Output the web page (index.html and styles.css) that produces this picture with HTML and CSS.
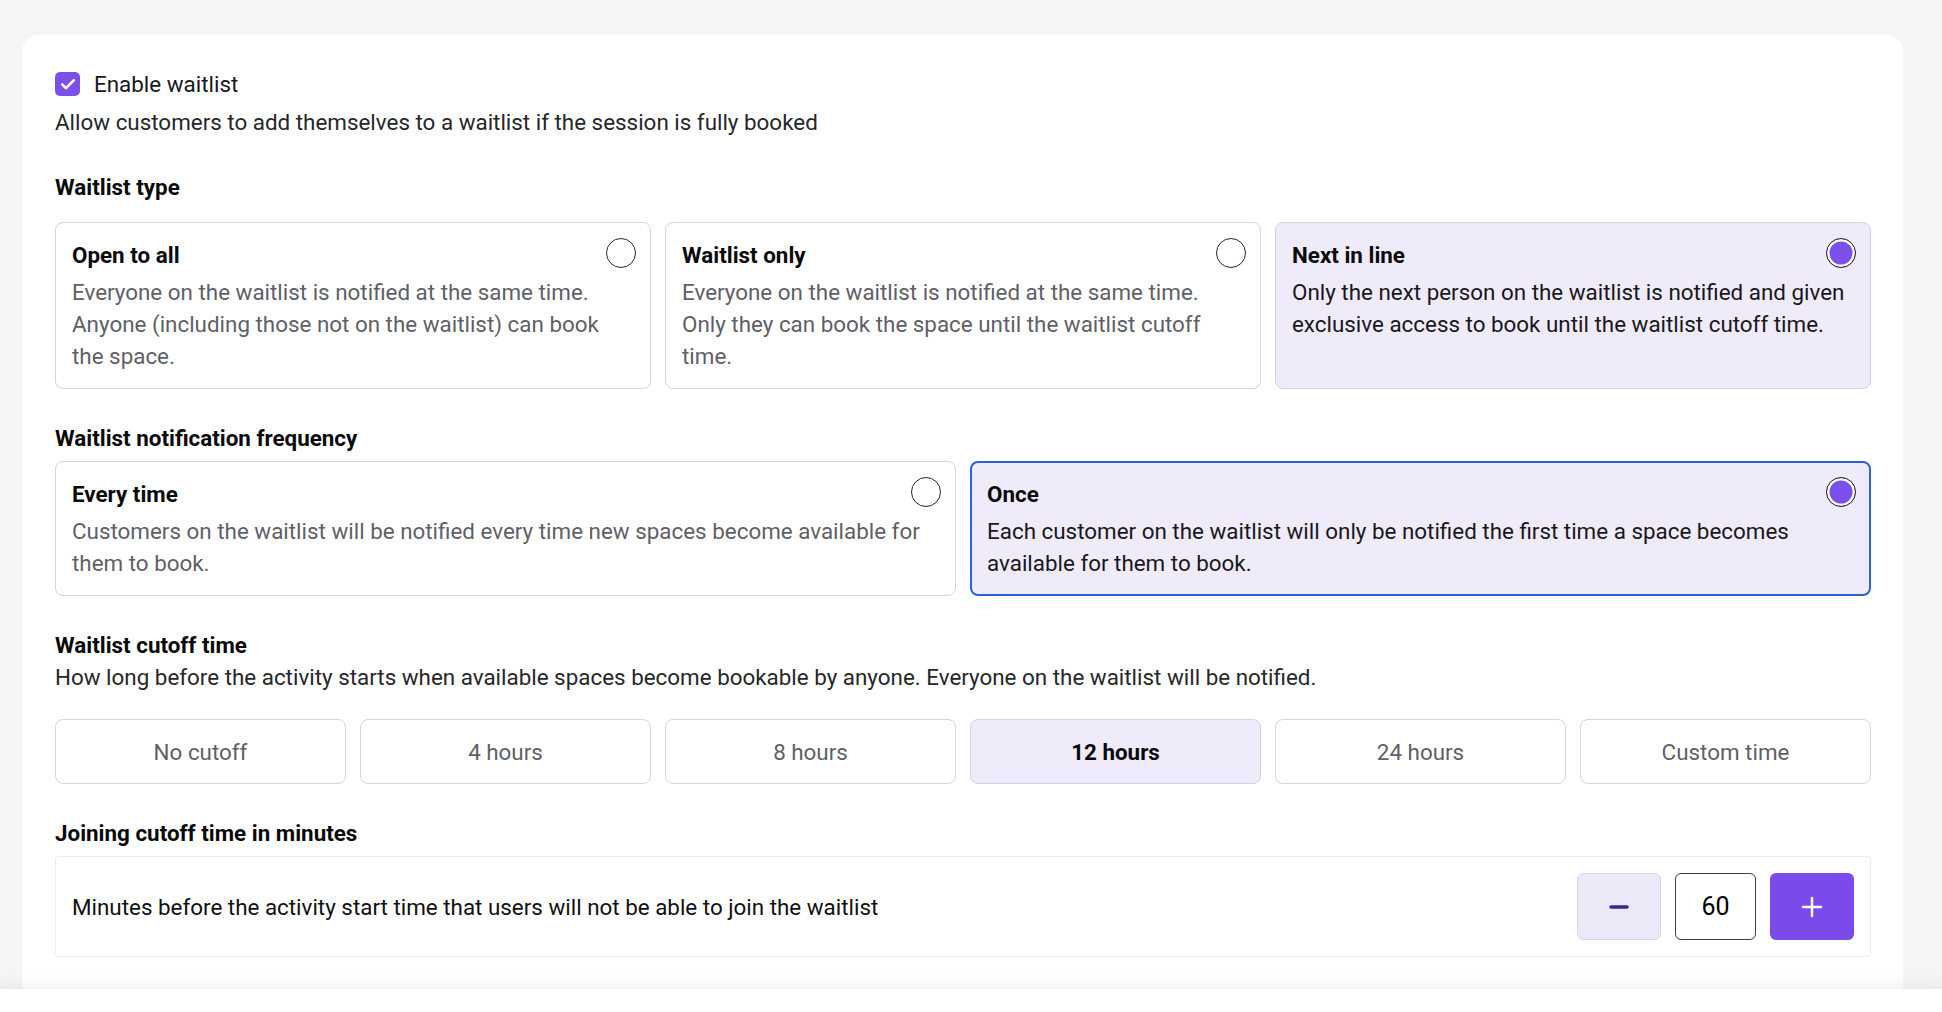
FILE: index.html
```html
<!DOCTYPE html>
<html lang="en">
  <head>
    <meta charset="UTF-8" />
    <meta name="viewport" content="width=device-width, initial-scale=1.0" />
    <title>Waitlist settings</title>
    <link rel="stylesheet" href="styles.css">
  </head>
  <body>
    <div class="page">
      <main class="settings">
        <label class="check-row">
          <span class="checkbox">
            <svg viewBox="0 0 24 24" width="20" height="20">
              <path d="M5 12.5l4.5 4.5L19 7.5" fill="none" stroke="#fff" stroke-width="3" stroke-linecap="round" stroke-linejoin="round" />
            </svg>
          </span>
          Enable waitlist
        </label>
        <p class="hint">Allow customers to add themselves to a waitlist if the session is fully booked</p>

        <section class="group">
          <h3 class="group-title first">Waitlist type</h3>
          <div class="options three">
            <div class="option">
              <div class="option-head">
                <span class="option-title">Open to all</span>
                <span class="radio"></span>
              </div>
              <p class="option-desc">Everyone on the waitlist is notified at the same time. Anyone (including those not on the waitlist) can book the space.</p>
            </div>
            <div class="option">
              <div class="option-head">
                <span class="option-title">Waitlist only</span>
                <span class="radio"></span>
              </div>
              <p class="option-desc">Everyone on the waitlist is notified at the same time. Only they can book the space until the waitlist cutoff time.</p>
            </div>
            <div class="option selected">
              <div class="option-head">
                <span class="option-title">Next in line</span>
                <span class="radio on"></span>
              </div>
              <p class="option-desc">Only the next person on the waitlist is notified and given exclusive access to book until the waitlist cutoff time.</p>
            </div>
          </div>
        </section>

        <section class="group">
          <h3 class="group-title">Waitlist notification frequency</h3>
          <div class="options two">
            <div class="option">
              <div class="option-head">
                <span class="option-title">Every time</span>
                <span class="radio"></span>
              </div>
              <p class="option-desc">Customers on the waitlist will be notified every time new spaces become available for them to book.</p>
            </div>
            <div class="option selected focused">
              <div class="option-head">
                <span class="option-title">Once</span>
                <span class="radio on"></span>
              </div>
              <p class="option-desc">Each customer on the waitlist will only be notified the first time a space becomes available for them to book.</p>
            </div>
          </div>
        </section>

        <section class="group">
          <h3 class="group-title flush">Waitlist cutoff time</h3>
          <p class="group-desc">How long before the activity starts when available spaces become bookable by anyone. Everyone on the waitlist will be notified.</p>
          <div class="cutoffs">
            <button class="cutoff">No cutoff</button>
            <button class="cutoff">4 hours</button>
            <button class="cutoff">8 hours</button>
            <button class="cutoff active">12 hours</button>
            <button class="cutoff">24 hours</button>
            <button class="cutoff">Custom time</button>
          </div>
        </section>

        <section class="group">
          <h3 class="group-title">Joining cutoff time in minutes</h3>
          <div class="minutes-box">
            <span>Minutes before the activity start time that users will not be able to join the waitlist</span>
            <div class="stepper">
              <button class="step minus">
                <svg viewBox="0 0 24 24" width="24" height="24">
                  <path d="M4 12h16" stroke="#36288f" stroke-width="3.5" stroke-linecap="round" />
                </svg>
              </button>
              <input class="step-value" type="text" value="60" />
              <button class="step plus">
                <svg viewBox="0 0 24 24" width="24" height="24">
                  <path d="M12 3v18M3 12h18" stroke="#fff" stroke-width="2.5" stroke-linecap="round" />
                </svg>
              </button>
            </div>
          </div>
        </section>
      </main>
    </div>
    <footer class="bottom-bar"></footer>
  </body>
</html>
```

FILE: styles.css
```css
body {
  margin: 0;
  padding: 0;
  font-family: Roboto, "Noto Sans", Arial, sans-serif;
  font-size: 22.4px;
  background-color: #fff;
  color: #111;
}

.page {
  background-color: #f5f5f5;
  padding: 35px 39px 0 22px;
}

.settings {
  background-color: #fff;
  border-radius: 16px 16px 0 0;
  padding: 33px 32px 32px 33px;
}

.check-row {
  display: flex;
  align-items: center;
  gap: 14px;
  height: 32px;
  font-size: 22.4px;
  color: #18181b;
}

.checkbox {
  width: 25px;
  height: 24px;
  border-radius: 5px;
  background-color: #7b4fea;
  display: flex;
  align-items: center;
  justify-content: center;
}

.hint {
  margin: 6px 0 0;
  font-size: 22.4px;
  line-height: 32px;
  color: #27272a;
}

.group {
  margin-top: 33px;
}

.group-title {
  margin: 0 0 7px;
  font-size: 22.4px;
  line-height: 32px;
  font-weight: 700;
  color: #0a0a0a;
}

.group-title.first {
  margin-bottom: 19px;
}

.group-title.flush {
  margin-bottom: 0;
}

.group-desc {
  margin: 0 0 26px;
  font-size: 22.4px;
  line-height: 32px;
  color: #27272a;
}

.options {
  display: grid;
  gap: 14px;
}

.options.three {
  grid-template-columns: repeat(3, 1fr);
}

.options.two {
  grid-template-columns: repeat(2, 1fr);
}

.option {
  border: 1px solid #d6d6da;
  border-radius: 8px;
  padding: 16px 14px 16px 16px;
  background-color: #fff;
}

.option.selected {
  background-color: #efebfb;
  border-color: #d5d1e2;
}

.option.focused {
  border: 2px solid #2b63d3;
  padding: 15px 13px 15px 15px;
}

.option-head {
  display: flex;
  justify-content: space-between;
  align-items: flex-start;
}

.option-title {
  font-size: 22.4px;
  line-height: 32px;
  font-weight: 700;
  color: #0a0a0a;
}

.radio {
  width: 30px;
  height: 30px;
  box-sizing: border-box;
  border: 1.5px solid #27272a;
  border-radius: 50%;
  background-color: #fff;
  margin-top: -1px;
}

.radio.on {
  background-color: #7b4fea;
  box-shadow: inset 0 0 0 2.5px #fff;
}

.option-desc {
  margin: 5px 8px 0 0;
  font-size: 22.4px;
  line-height: 32px;
  color: #5f5f67;
}

.option.selected .option-desc {
  color: #18181b;
}

.cutoffs {
  display: grid;
  grid-template-columns: repeat(6, 1fr);
  gap: 14px;
}

.cutoff {
  height: 65px;
  border: 1px solid #d6d6da;
  border-radius: 8px;
  background-color: #fff;
  font-family: inherit;
  font-size: 22.4px;
  color: #5f5f67;
  cursor: pointer;
}

.cutoff.active {
  background-color: #efebfb;
  border-color: #d5d1e2;
  color: #0a0a0a;
  font-weight: 700;
}

.minutes-box {
  display: flex;
  align-items: center;
  justify-content: space-between;
  border: 1px solid #ececee;
  border-radius: 4px;
  padding: 16px;
  font-size: 22.4px;
  color: #111;
}

.stepper {
  display: flex;
  gap: 14px;
}

.step {
  width: 84px;
  height: 67px;
  border-radius: 6px;
  display: flex;
  align-items: center;
  justify-content: center;
  cursor: pointer;
}

.step.minus {
  background-color: #ebe8f7;
  border: 1px solid #dcd6f3;
}

.step.plus {
  background-color: #7b4aea;
  border: none;
}

.step-value {
  width: 81px;
  height: 67px;
  box-sizing: border-box;
  border: 1px solid #3f3f46;
  border-radius: 6px;
  text-align: center;
  font-family: inherit;
  font-size: 25px;
  color: #000;
}

.bottom-bar {
  height: 25px;
  background-color: #fff;
  box-shadow: 0 -6px 14px rgba(0, 0, 0, 0.05);
  position: relative;
}
```
